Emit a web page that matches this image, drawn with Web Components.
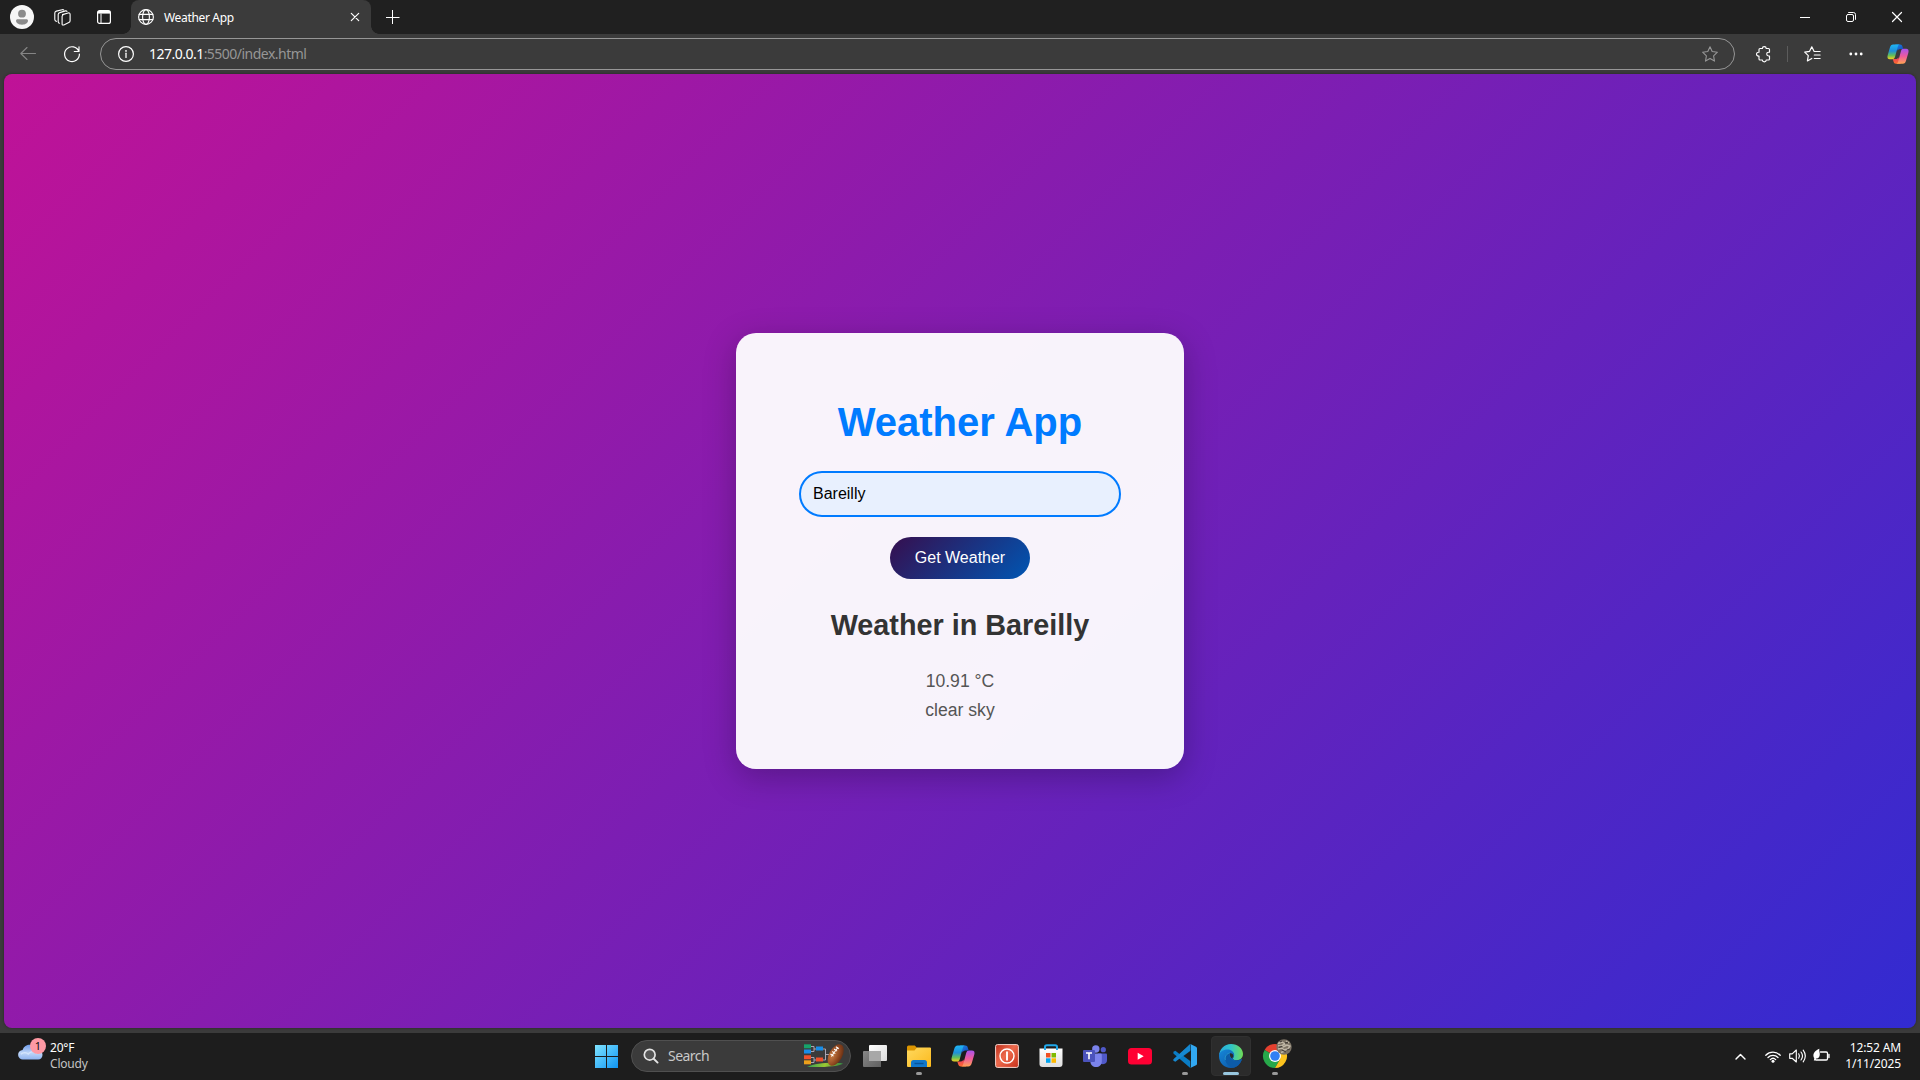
<!DOCTYPE html>
<html lang="en">
<head>
<meta charset="utf-8">
<title>Weather App</title>
<style>
html,body{margin:0;height:100%;background:#3b3b3b;overflow:hidden}
body{font-family:"Noto Sans","Open Sans",sans-serif;color:#fff}
</style>
</head>
<body>
<desktop-shell>
  <tab-strip slot="tabs"><browser-tab>Weather App</browser-tab></tab-strip>
  <nav-bar slot="nav"><span slot="host">127.0.0.1</span><span slot="path">:5500/index.html</span></nav-bar>
  <weather-page slot="page">
    <weather-card>
      <span slot="title">Weather App</span>
      <city-field>Bareilly</city-field>
      <action-button>Get Weather</action-button>
      <weather-result><span slot="heading">Weather in Bareilly</span><span slot="temp">10.91 °C</span><span slot="sky">clear sky</span></weather-result>
    </weather-card>
  </weather-page>
  <task-bar slot="taskbar"></task-bar>
</desktop-shell>
<script>
const def = (name, html) => customElements.define(name, class extends HTMLElement {
  constructor() { super(); this.attachShadow({mode: 'open'}).innerHTML = html; }
});

/* Icon library: name -> [width, height, markup]; strokes inherit currentColor. */
const L = 'fill="none" stroke="currentColor" stroke-linecap="round" stroke-linejoin="round"';
const copilot = `<defs>
 <linearGradient id="a" x1="0" y1="0" x2="0" y2="1"><stop offset="0" stop-color="#1fb6f5"/><stop offset=".45" stop-color="#1f8fd8"/><stop offset=".75" stop-color="#63bf5a"/><stop offset="1" stop-color="#f3cf20"/></linearGradient>
 <linearGradient id="b" x1="0" y1="0" x2="0" y2="1"><stop offset="0" stop-color="#a653ee"/><stop offset=".5" stop-color="#ee5a9c"/><stop offset="1" stop-color="#ffa255"/></linearGradient>
 <linearGradient id="c" x1="0" y1="0" x2="1" y2="1"><stop offset="0" stop-color="#1a8be8"/><stop offset="1" stop-color="#1743b8"/></linearGradient>
 <linearGradient id="d" x1="0" y1="0" x2="0" y2="1"><stop offset="0" stop-color="#e83d62"/><stop offset="1" stop-color="#ff6a2d"/></linearGradient></defs>
 <path fill="url(#c)" d="M9 1.500h5.200c1.700 0 2.200.8 2.700 2.400l.8 2.600h-3.600c-1.300 0-2 .8-2.400 2z"/>
 <path fill="url(#d)" d="M15 22.500H9.800c-1.700 0-2.200-.8-2.700-2.400l-.8-2.600h3.600c1.300 0 2-.8 2.400-2z"/>
 <path fill="url(#a)" d="M6.800 1.500h7.200c-1.100 0-1.700.8-2.100 2L8.800 15c-.5 1.900-1.300 2.600-3 2.600H3.200C.8 17.600 0 16 .7 13.500L3.200 5c.7-2.300 1.500-3.500 3.600-3.500z"/>
 <path fill="url(#b)" d="M17.200 22.500H10c1.100 0 1.700-.8 2.100-2L15.200 9c.5-1.900 1.300-2.600 3-2.600h2.600c2.400 0 3.200 1.600 2.500 4.100L20.800 19c-.7 2.300-1.500 3.500-3.600 3.500z"/>`;
const ICONS = {
 profile: [24,24,`<circle cx="12" cy="12" r="12" fill="#f7f7f7"/><circle cx="12" cy="8.700" r="3.900" fill="#8b8b8b"/><path d="M6 15.800c0-1 .7-1.600 1.600-1.600h8.800c1 0 1.600.6 1.600 1.600 0 2.400-2.700 3.900-6 3.900s-6-1.500-6-3.900z" fill="#8b8b8b"/>`],
 spaces: [17,17,`<g ${L} stroke-width="1.100"><path d="M8.200 5.400 13.800 3.800q2-.5 2 1.400v6.300q0 1.300-1.300 1.900l-5 2.300q-1.700.6-1.700-1V7.300q0-1.500 1.600-2z" transform="translate(.3 .2)"/><path d="M5.600 14.200q-1.400-.2-1.400-1.500V5.600q0-1.600 1.500-2l5.800-1.700q1-.2 1.500.5"/><path d="M2.400 12.400Q.8 12 .8 10.600V4.100q0-1.600 1.500-2L8.200.7q1-.2 1.500.3"/></g>`],
 tabs: [14,14,`<rect x=".6" y=".6" width="12.800" height="12.800" rx="2" ${L} stroke-width="1.200"/><path d="M1 1h12v2.600H1z" fill="currentColor"/><path d="M4 4v9" ${L} stroke-width="1"/>`],
 globe: [16,16,`<g ${L} stroke-width="1.100"><circle cx="8" cy="8" r="7.400"/><ellipse cx="8" cy="8" rx="3.400" ry="7.400"/><path d="M1.200 5.400h13.600M1.200 10.600h13.600"/></g>`],
 x: [10,10,`<path d="M.5.500l9 9M9.500.500l-9 9" ${L} stroke-width="1.200"/>`],
 tabx: [8,8,`<path d="M.3.300l7.400 7.400M7.700.300L.3 7.700" ${L} stroke-width="1.200"/>`],
 plus: [14,14,`<path d="M6.500 0v14M0 7.500h13.500" fill="none" stroke="currentColor" stroke-width="1"/>`],
 min: [10,10,`<path d="M0 5.500h10" stroke="currentColor"/>`],
 restore: [10,10,`<g ${L} stroke-width="1"><rect x=".5" y="2.500" width="7" height="7" rx="1.500"/><path d="M2.600.5H7.400q2.100 0 2.100 2.100v4.800"/></g>`],
 back: [16,14,`<path d="M15.500 6.500H.8M7 .5.8 6.500 7 12.500" ${L} stroke-width="1.100"/>`],
 reload: [16,16,`<path d="M14.900 5.500A7.400 7.400 0 1 0 15.400 8M15 .8v4.700h-4.700" ${L} stroke-width="1.200"/>`],
 info: [16,16,`<circle cx="8" cy="8" r="7.400" ${L} stroke-width="1.200"/><path d="M8 7.200v4.200" ${L} stroke-width="1.300"/><circle cx="8" cy="4.900" r=".9" fill="currentColor"/>`],
 star: [16,16,`<path d="M8 .8l2.200 4.700 5.200.7-3.800 3.600.9 5.300L8 12.500l-4.500 2.600.9-5.300L.6 6.200l5.200-.7z" ${L} stroke-width="1.100"/>`],
 puzzle: [16,16,`<path d="M5 2.500h2.400a1.900 1.900 0 0 1 3.800 0h2.300q1 0 1 1v2.700h-.9a1.900 1.900 0 0 0 0 3.800h.9v3q0 1-1 1h-2.300a1.900 1.900 0 0 1-3.800 0H5q-1 0-1-1v-2.900h-.5a1.900 1.900 0 0 1 0-3.900H4V3.500q0-1 1-1z" ${L} stroke-width="1.150"/>`],
 favs: [17,16,`<path d="M11.300 5.500 10 5.300 7.800.8 5.600 5.300.7 6.100l3.600 3.500-.9 5.300 4.400-2.500M11.300 5.500h4.800M10.300 9h5.800M10.300 12.500h5.800" ${L} stroke-width="1.200"/>`],
 dots: [14,4,`<g fill="currentColor"><circle cx="1.800" cy="2" r="1.400"/><circle cx="7" cy="2" r="1.400"/><circle cx="12.200" cy="2" r="1.400"/></g>`],
 copilot: [24,24,copilot],
 cloud: [26,26,`<defs><linearGradient id="a" x1="0" y1="0" x2="0" y2="1"><stop offset="0" stop-color="#6f9cea"/><stop offset=".55" stop-color="#bfd6f8"/><stop offset="1" stop-color="#8fb3ef"/></linearGradient></defs><path d="M5 23.500a4.700 4.700 0 0 1-.4-9.400C6 9.800 9 8.500 12.500 8.700c3 .2 5 2.300 5.700 5.200 3.800-.2 6.500 1.800 6.300 5-.1 2.700-1.700 4.600-4.300 4.600z" fill="url(#a)"/><path d="M3 18.200c2-2 5.500-2 7.200-.1 2.500-3.500 7-3.200 9.300-.2" fill="none" stroke="#dbe8fc" stroke-width="1.300" opacity=".8"/>`],
 windows: [24,24,`<defs><linearGradient id="a" gradientUnits="userSpaceOnUse" x1="0" y1="0" x2="24" y2="24"><stop stop-color="#7fe3ff"/><stop offset="1" stop-color="#0a91f2"/></linearGradient></defs><path fill="url(#a)" d="M0 0h11v11H0zm12 0h11v11H12zM0 12h11v11H0zm12 0h11v11H12z"/>`],
 search: [16,16,`<circle cx="6.700" cy="6.700" r="5.400" fill="#555" stroke="#e4e4e4" stroke-width="1.700"/><path d="M10.700 10.800l3.900 3.800" fill="none" stroke="#e4e4e4" stroke-width="1.900" stroke-linecap="round"/>`],
 bracket: [40,24,`<defs><radialGradient id="a" cx=".4" cy=".3" r=".8"><stop stop-color="#c67a42"/><stop offset=".6" stop-color="#8d461f"/><stop offset="1" stop-color="#5b2911"/></radialGradient><linearGradient id="b"><stop stop-color="#2f9e55"/><stop offset=".5" stop-color="#9bc832"/><stop offset="1" stop-color="#318443"/></linearGradient></defs><path d="M3 23c8-4 26-5 36-3.600C37 22 20 23.500 3 23z" fill="url(#b)"/><path d="M7 2.500h3v5H7M10 5h3M7 13.500h3v5H7M10 16h3M18.500 5h3v11h-3M21.500 10.500h3.500" fill="none" stroke="#aaa4b2" stroke-width="1"/><path fill="#16a36a" d="M0 .3h7v4H0z"/><path fill="#188de8" d="M0 5.400h7v4H0zM12 2.500h7v4h-7z"/><path fill="#f0502b" d="M0 11.300h7v4H0zM12 13.500h7v4h-7z"/><path fill="#eda01b" d="M0 16.300h7v4H0z"/><ellipse cx="31.700" cy="11" rx="11.600" ry="6.600" transform="rotate(-61 31.700 11)" fill="url(#a)"/><path d="M27.300 12.500 34 3.200M26.500 10l3 2.100M28.300 7.500l3 2.100M30.100 5l3 2.100M31.900 2.700l2.800 2" stroke="#fff" stroke-width="1.100"/>`],
 taskview: [24,24,`<defs><linearGradient id="a" x2="1" y2="1"><stop stop-color="#fff"/><stop offset="1" stop-color="#dcdcdc"/></linearGradient><linearGradient id="b" x2="1" y2="1"><stop stop-color="#888"/><stop offset="1" stop-color="#606060"/></linearGradient></defs><rect x="6" y="1" width="18" height="16" rx="1" fill="url(#a)"/><path d="M1 7h17v16H1q-1 0-1-1V8q0-1 1-1z" fill="url(#b)"/><path d="M6 7h12v10H6z" fill="#a8a8a8"/>`],
 folder: [24,24,`<defs><linearGradient id="a" x2="1" y2="1"><stop stop-color="#ffd95f"/><stop offset="1" stop-color="#fcb91c"/></linearGradient></defs><path d="M0 3q0-1.500 1.500-1.500h6.300L10.200 4H23q1 0 1 1v3H0z" fill="#dc9500"/><path d="M0 6.500h7.500l2.500-3h13q1 0 1 1V22q0 1-1 1H1q-1 0-1-1z" fill="url(#a)"/><path d="M4 23v-4.500q0-2.500 2.500-2.500h11q2.500 0 2.500 2.500V23z" fill="#1177cb"/><path d="M7.500 19.500h9" stroke="#07539a" stroke-width="1.400"/>`],
 power: [24,24,`<defs><linearGradient id="a" x1="0" y1="0" x2="1" y2="1"><stop stop-color="#bc2e1b"/><stop offset=".45" stop-color="#ed6a4d"/><stop offset="1" stop-color="#c72f19"/></linearGradient></defs><rect x=".6" y=".6" width="22.800" height="22.800" rx="1.800" fill="url(#a)" stroke="#f6d7cf" stroke-width="1"/><circle cx="12" cy="12" r="7" fill="none" stroke="#fff" stroke-width="1.400"/><path d="M12 7.500v9" stroke="#fff" stroke-width="1.900"/>`],
 store: [24,24,`<defs><linearGradient id="a" x2="0" y2="1"><stop stop-color="#fff"/><stop offset="1" stop-color="#dedede"/></linearGradient></defs><path d="M.5 4.500h23V20q0 3-3 3h-17q-3 0-3-3z" fill="url(#a)"/><path d="M6 6V3q0-1.800 1.800-1.800h8.400Q18 1.200 18 3v3" fill="none" stroke="#21a8ea" stroke-width="2"/><path fill="#f05022" d="M7 9h4.500v4.500H7z"/><path fill="#7fba00" d="M12.500 9H17v4.500h-4.500z"/><path fill="#00a4ef" d="M7 14.300h4.500v4.500H7z"/><path fill="#ffb900" d="M12.500 14.300H17v4.500h-4.500z"/>`],
 teams: [24,24,`<circle cx="20.300" cy="5.700" r="2.600" fill="#5059c9"/><path d="M15 9.500h8q1 0 1 1V16q0 4-4 4.200-3 0-4-2z" fill="#5059c9"/><circle cx="12.800" cy="5" r="3.700" fill="#7b83eb"/><path d="M8 9.500h9.500q1.300 0 1.300 1.300v6.700c0 3.500-2.500 5.500-5.700 5.500s-5.700-2-5.700-5.500z" fill="#7b83eb"/><rect y="6" width="12" height="12" rx="1" fill="#4b53bc"/><path d="M3 9h6M6 9v6.300" stroke="#fff" stroke-width="1.600"/>`],
 youtube: [24,24,`<rect y="4" width="24" height="16.500" rx="3.500" fill="#ff0033"/><path d="M9.700 8.800v7l6-3.500z" fill="#fff"/>`],
 vscode: [24,24,`<path d="M17.300 0 6.800 10.200 2.400 6.800.4 7.800v1.600L17.300 24z" fill="#0a7cc4"/><path d="M17.300 0v6.500L2.400 17.800l-2-1v-1.600z" fill="#1688d0"/><path d="M17.300 0 23 2.700Q24 3.200 24 4.200v15.600q0 1-1 1.500L17.300 24q.7-.4.700-1.300V1.300q0-.9-.7-1.300z" fill="#31a8f2"/><path d="M17.900 6.500v11L10.500 12z" fill="#1d1d1d"/>`],
 edge: [24,24,`<defs><linearGradient id="a" x1="0" y1=".4" x2="1" y2=".4"><stop stop-color="#27a8dc"/><stop offset=".5" stop-color="#30c4c9"/><stop offset="1" stop-color="#70dc55"/></linearGradient><linearGradient id="b" x2="1" y2="1"><stop stop-color="#1687d9"/><stop offset="1" stop-color="#0a4f9e"/></linearGradient></defs><path d="M0 12C.2 5.200 5.300 0 12 0c7 0 12 4.800 12 10 0 3.600-2.700 6.200-6.200 6.200-2.600 0-4-.9-4-1.800 0-.8 1.200-1.100 1.200-3 0-2.300-2.200-4.200-5.300-4.200C4.500 7.200.4 9.300 0 12z" fill="url(#a)"/><path d="M0 12c0-4.200 4-6.600 8.600-6.600 3.800 0 6.600 2.600 6.600 5.600 0 1.900-1.300 2.500-1.300 3.400 0 .9 1.300 1.800 3.700 1.900 2.300.1 4-.9 4.800-1.300.4-.2.7.1.500.5C21 20.600 17 24 12 24 5 24 0 18.800 0 12z" fill="url(#b)"/><path d="M10.400 9.100c-3 .4-4.500 3-4.200 6.100.4 4.300 4 8 8.200 8.500 3.600-.7 6.700-3.300 8.400-7.900-4.500 3-9.900 1.200-11.600-2-.9-1.700-.7-3.200-.8-4.700z" fill="#0c5ba8"/><path d="M10.700 9c-3.200.7-5 3.500-4.400 6.800" fill="none" stroke="#30a7d7" stroke-width=".8"/><path d="M10.800 9.200c1.800-.3 3.600.7 3.500 2.500-.1 1.100-1.200 1.800-.7 3.100-1.800-.7-3.200-3-2.800-5.600z" fill="#2b2b2b"/>`],
 chrome: [30,30,`<path d="M12 18 1.610 12A12 12 0 0 1 22.400 12z" fill="#e5402f"/><path d="M1.600 12A12 12 0 0 0 12 30l5.200-9L12 18z" fill="#27a84a"/><path d="M22.400 12A12 12 0 0 1 12 30l5.200-9-1.700-9z" fill="#fcc31e"/><circle cx="12" cy="18" r="6" fill="#fff"/><circle cx="12" cy="18" r="4.800" fill="#3180f4"/><circle cx="21" cy="9" r="7.700" fill="#7b7264"/><path d="M15 5.500l4-1.500 3 2-4 2-3-.3M20 9l4-2 3 1-2 3-4 .6M15 11l4-1 3 3-4 1.500M23 3l3 2" fill="none" stroke="#c0b7a6" stroke-width="1.400"/><path d="M16 9.300l3-1M22 5l3-.5M19 12l4 2M24 12l3-1M17 4l2-1" stroke="#45403a" stroke-width="1.300"/>`],
 chevron: [11,7,`<path d="M1 6l4.500-4.600L10 6" ${L} stroke-width="1.400"/>`],
 wifi: [16,13,`<g ${L} stroke-width="1.300"><path d="M.8 5.200a10.200 10.200 0 0 1 14.400 0M3 7.500a7 7 0 0 1 10 0M5.300 9.600a3.900 3.900 0 0 1 5.400 0"/></g><circle cx="8" cy="11.200" r="1.500" fill="currentColor"/>`],
 sound: [17,14,`<path d="M.7 4.800h2.500L7.300 1v12L3.200 9.300H.7zM9.700 4.800q1.500 2.200 0 4.400M12 3q3 4 0 8M14.200 1.200q4.200 5.800 0 11.600" ${L} stroke-width="1.150"/>`],
 battery: [17,14,`<path d="M7.500 3H13.200q1.300 0 1.300 1.300v5.400q0 1.300-1.300 1.300H3.500q-1.300 0-1.300-1.300M16 5.500v3" ${L} stroke-width="1.300"/><path d="M6.400-.3C3 1 .3 3.300.4 6.800c0 1.100.4 1.900 1 2.400L.8 11.500h1.100l.8-1.900c3.200.1 4.400-2.400 4-5.300C6.500 2.500 6 1.300 6.400-.3z" fill="currentColor"/>`]
};
customElements.define('ui-icon', class extends HTMLElement {
  connectedCallback() {
    if (this.shadowRoot) return;
    const [w, h, m] = ICONS[this.getAttribute('name')];
    const s = this.getAttribute('size');
    this.attachShadow({mode: 'open'}).innerHTML =
      `<style>:host{display:block;flex:none}svg{display:block;overflow:visible}</style><svg width="${s || w}" height="${s ? s * h / w : h}" viewBox="0 0 ${w} ${h}">${m}</svg>`;
  }
});

def('desktop-shell', `<style>:host{display:flex;flex-direction:column;width:1920px;height:1080px;background:#3b3b3b}
.page{flex:1;display:flex;padding:0 4px 5px;min-height:0}::slotted([slot=page]){flex:1}</style>
<slot name="tabs"></slot><slot name="nav"></slot><div class="page"><slot name="page"></slot></div><slot name="taskbar"></slot>`);

def('tab-strip', `<style>:host{display:flex;align-items:center;height:34px;background:#202020;color:#fff}
.left{display:flex;align-items:center;width:131px;box-sizing:border-box;padding-left:10px}
.s{margin-left:20px}.t{margin-left:26px}.plus{margin-left:15px}
.win{margin-left:auto;display:flex;align-items:center;padding-right:18px;gap:36px}</style>
<div class="left"><ui-icon name="profile"></ui-icon><ui-icon class="s" name="spaces"></ui-icon><ui-icon class="t" name="tabs"></ui-icon></div>
<slot></slot><ui-icon class="plus" name="plus"></ui-icon>
<div class="win"><ui-icon name="min"></ui-icon><ui-icon name="restore"></ui-icon><ui-icon name="x"></ui-icon></div>`);

def('browser-tab', `<style>:host{display:flex;align-items:center;width:240px;height:34px;box-sizing:border-box;padding:0 12px 0 7px;background:#3b3b3b;border-radius:8px 8px 0 0;position:relative;font-size:12px;letter-spacing:-.33px}
:host::before,:host::after{content:"";position:absolute;bottom:0;width:8px;height:8px}
:host::before{left:-8px;background:radial-gradient(circle at 0 0,transparent 7.500px,#3b3b3b 8px)}
:host::after{right:-8px;background:radial-gradient(circle at 100% 0,transparent 7.500px,#3b3b3b 8px)}
span{flex:1;margin-left:10px;white-space:nowrap}</style>
<ui-icon name="globe"></ui-icon><span><slot></slot></span><ui-icon name="tabx"></ui-icon>`);

def('nav-bar', `<style>:host{display:flex;align-items:center;height:40px;background:#3b3b3b;color:#fff;padding-left:20px}
.back{color:#858585}.reload{margin-left:28px}
.addr{margin-left:20px;width:1635px;height:32px;box-sizing:border-box;border:1px solid #969696;border-radius:16px;display:flex;align-items:center;padding:0 16px 0 17px;font-size:14px;letter-spacing:-.52px;white-space:nowrap}
.url{flex:1;margin-left:15px;margin-top:-1px;color:#969696}.url slot[name=host]{color:#fff}.star{color:#969696}
.p{margin-left:20px}.div{width:1px;height:16px;background:#5c5c5c;margin-left:16px}.f{margin-left:16px}.d{margin-left:28px}.c{margin-left:24px}</style>
<ui-icon class="back" name="back"></ui-icon><ui-icon class="reload" name="reload"></ui-icon>
<div class="addr"><ui-icon name="info"></ui-icon><span class="url"><slot name="host"></slot><slot name="path"></slot></span><ui-icon class="star" name="star"></ui-icon></div>
<ui-icon class="p" name="puzzle"></ui-icon><div class="div"></div><ui-icon class="f" name="favs"></ui-icon><ui-icon class="d" name="dots"></ui-icon><ui-icon class="c" name="copilot" size="22"></ui-icon>`);

def('weather-page', `<style>:host{display:flex;align-items:center;justify-content:center;border-radius:8px;background:linear-gradient(135deg,#c01297,#322bd1);box-shadow:0 0 3px rgba(0,0,0,.35);font-family:"Liberation Sans",Arial,sans-serif}</style><slot></slot>`);

def('weather-card', `<style>:host{display:flex;flex-direction:column;align-items:center;width:448px;height:436px;box-sizing:border-box;padding-top:66px;background:rgba(255,255,255,.95);border-radius:20px;box-shadow:0 8px 32px rgba(0,0,0,.25)}
h1{margin:0 0 26px;font-size:40px;line-height:46px;color:#007bff}</style><h1><slot name="title"></slot></h1><slot></slot>`);

def('city-field', `<style>:host{display:flex;align-items:center;width:322px;height:46px;box-sizing:border-box;border:2px solid #007bff;border-radius:25px;background:#e8f0fe;color:#000;font-size:16px;padding:0 12px}</style><slot></slot>`);

def('action-button', `<style>:host{display:flex;align-items:center;justify-content:center;width:140px;height:42px;margin-top:20px;border-radius:25px;background:linear-gradient(135deg,#360e4e,#0056b3);font-size:16px;color:#fff}</style><slot></slot>`);

def('weather-result', `<style>:host{display:flex;flex-direction:column;align-items:center;margin-top:29px;color:#555;font-size:17.600px}
h2{margin:0 0 29px;font-size:28.800px;line-height:34px;color:#333}p{margin:0 0 9px;line-height:20px}</style>
<h2><slot name="heading"></slot></h2><p><slot name="temp"></slot></p><p><slot name="sky"></slot></p>`);

def('task-app', `<style>:host{display:flex;align-items:center;justify-content:center;height:40px;position:relative}
:host([active])::before{content:"";position:absolute;left:50%;margin-left:-20px;top:0;width:38px;height:38px;border:1px solid #303030;border-radius:4px;background:#2b2b2b}
:host([running])::after{content:"";position:absolute;bottom:1px;left:50%;margin-left:-3px;width:6px;height:3px;border-radius:2px;background:#999}
:host([active])::after{content:"";position:absolute;bottom:1px;left:50%;margin-left:-8px;width:16px;height:3px;border-radius:2px;background:#98c7df}
slot{position:relative;display:block}</style><slot></slot>`);

def('task-bar', `<style>:host{display:flex;height:47px;background:#1d1d1d;box-sizing:border-box;color:#fff;font-size:12px}
.w{display:flex;width:595px;padding:3px 0 0 18px;box-sizing:border-box}
.ico{position:relative;width:32px}.badge{position:absolute;left:12px;top:2px;width:16px;height:16px;border-radius:8px;background:#ff99a4;color:#111;font-size:11px;line-height:16px;text-align:center}
.lines{display:flex;flex-direction:column;line-height:16px;padding-top:4px;letter-spacing:-.2px}.lines b{font-weight:400}.lines i{font-style:normal;color:#c4c4c4}
.start{margin-top:12px}.search{display:flex;align-items:center;margin:7px 0 0 12px;width:220px;height:32px;box-sizing:border-box;border:1px solid #505050;border-radius:16px;background:#3b3b3b;padding:0 6px 0 11px;font-size:14px;color:#c8c8c8;letter-spacing:-.55px}
.search span{flex:1;margin-left:9px;margin-top:-1px}.apps{display:grid;grid-template-columns:repeat(5,44px) 44.500px 45px 45.500px 46px 42px;padding:3px 0 0 2px;align-items:start}
.tray{margin-left:auto;display:flex;padding-right:19px}.g{display:flex;align-items:center;height:46px}
.time{width:71px;text-align:right;line-height:16px;padding-top:7px;letter-spacing:-.13px;white-space:nowrap}</style>
<div class="w"><div class="ico"><ui-icon name="cloud"></ui-icon><div class="badge">1</div></div><div class="lines"><b>20°F</b><i>Cloudy</i></div></div>
<ui-icon class="start" name="windows"></ui-icon>
<div class="search"><ui-icon name="search"></ui-icon><span>Search</span><ui-icon name="bracket"></ui-icon></div>
<div class="apps">
<task-app><ui-icon name="taskview"></ui-icon></task-app><task-app running><ui-icon name="folder"></ui-icon></task-app><task-app><ui-icon name="copilot"></ui-icon></task-app><task-app><ui-icon name="power"></ui-icon></task-app><task-app><ui-icon name="store"></ui-icon></task-app><task-app><ui-icon name="teams"></ui-icon></task-app><task-app><ui-icon name="youtube"></ui-icon></task-app><task-app running><ui-icon name="vscode"></ui-icon></task-app><task-app active><ui-icon name="edge"></ui-icon></task-app><task-app running><ui-icon name="chrome" style="margin:-6px -6px 0 0"></ui-icon></task-app>
</div>
<div class="tray"><div class="g"><ui-icon name="chevron"></ui-icon><ui-icon name="wifi" style="margin-left:19px"></ui-icon><ui-icon name="sound" style="margin-left:8px"></ui-icon><ui-icon name="battery" style="margin-left:7px"></ui-icon></div>
<div class="time">12:52 AM<br>1/11/2025</div></div>`);
</script>
</body>
</html>
